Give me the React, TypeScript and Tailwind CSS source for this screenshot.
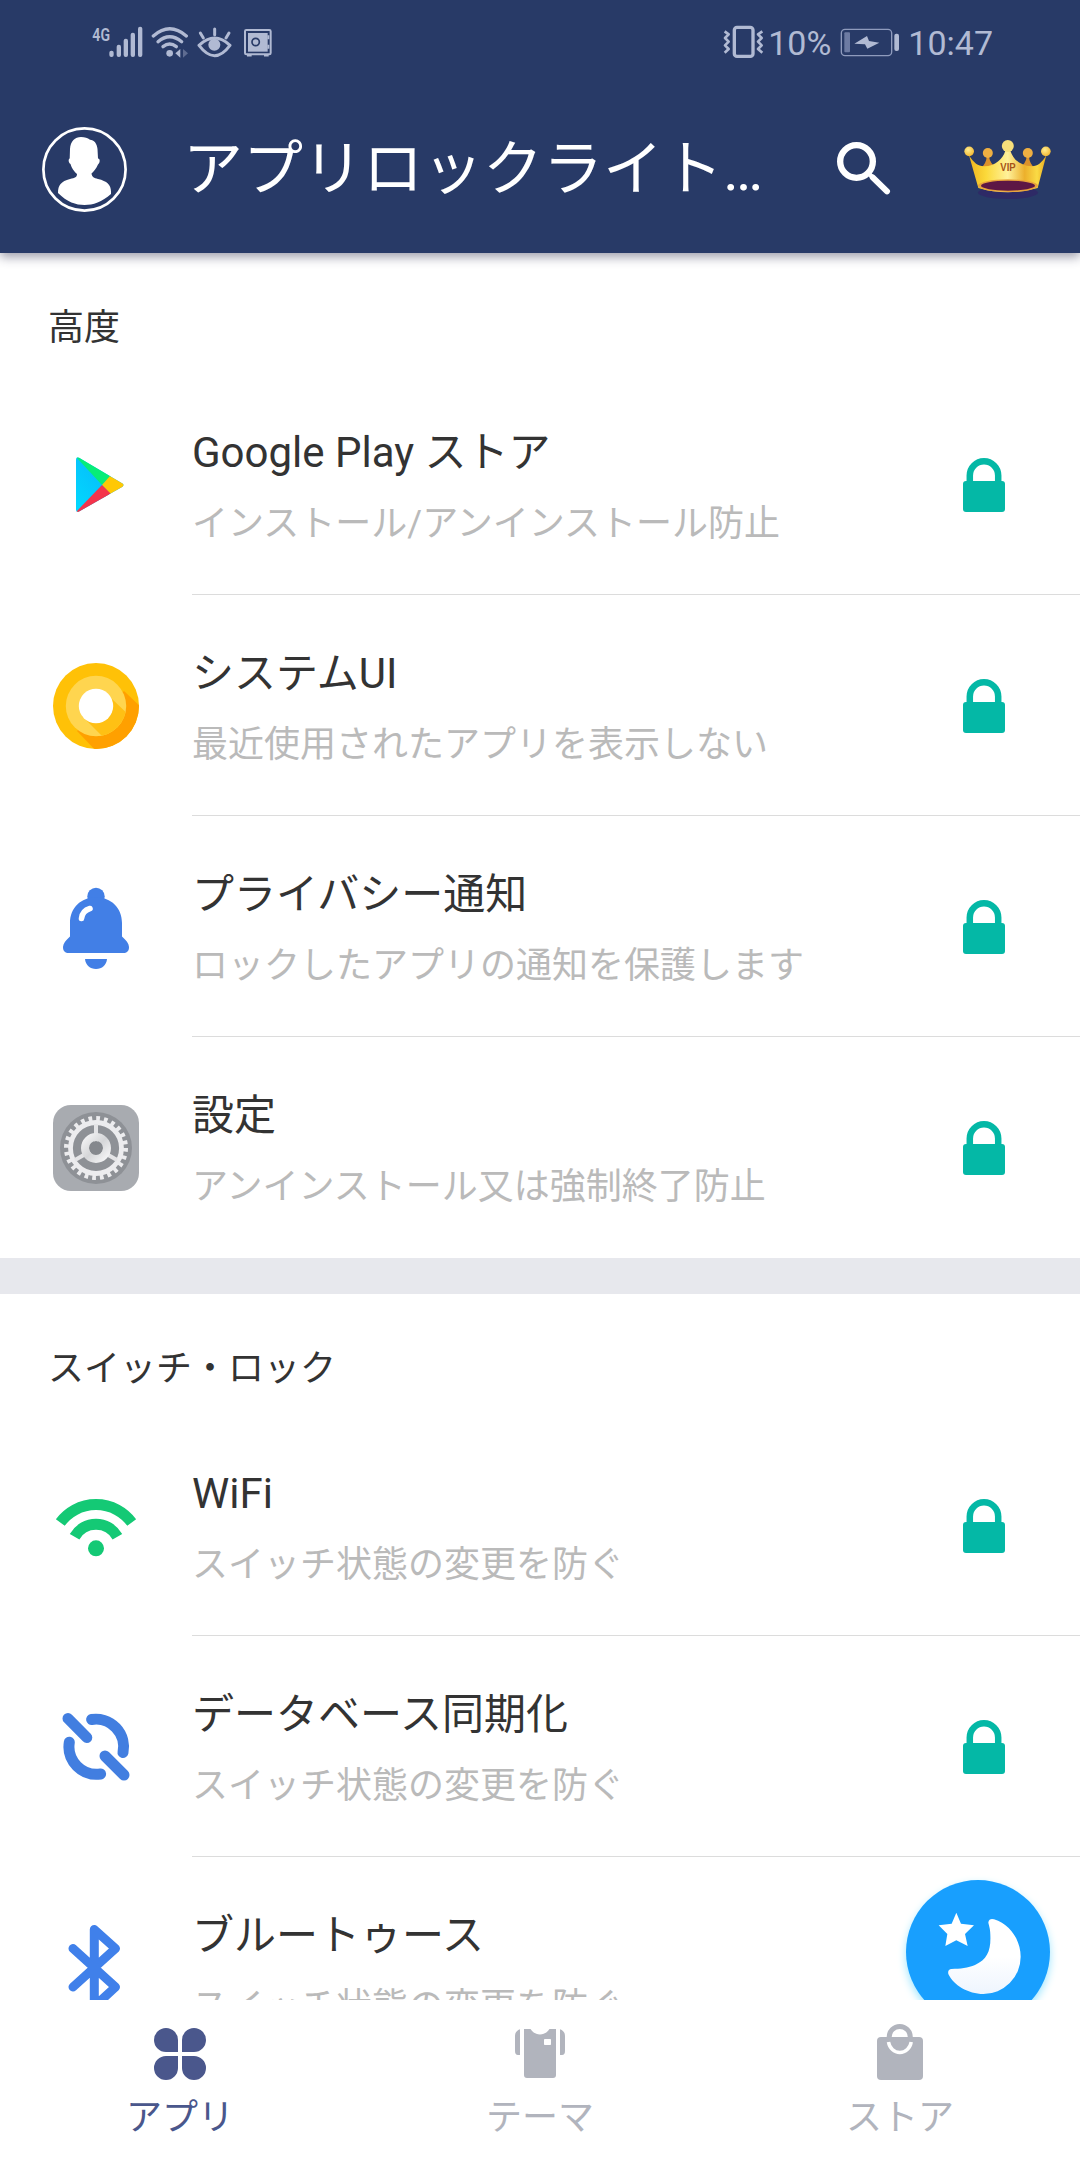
import React from "react";

type IconProps = { className?: string };

const STATUS = "#b1bad3";

function SignalIcon() {
  return (
    <svg viewBox="36 45 156 99" className="h-[33px] w-[52px]" fill={STATUS}>
      <text x="37" y="92" fontSize="56" fontWeight="600" textLength="53" lengthAdjust="spacingAndGlyphs" fontFamily="Roboto, sans-serif">4G</text>
      <rect x="88" y="122" width="13" height="19" rx="6" />
      <rect x="110" y="104" width="13" height="37" rx="6" />
      <rect x="131" y="86" width="13" height="55" rx="6" />
      <rect x="152" y="68" width="13" height="73" rx="6" />
      <rect x="174" y="50" width="13" height="91" rx="6" />
    </svg>
  );
}

function StatusWifiIcon() {
  return (
    <svg viewBox="213 45 114 99" className="ml-[7px] h-[33px] w-[38px]" fill="none" stroke={STATUS} strokeWidth="10" strokeLinecap="round">
      <path d="M220 78 Q269 35 319 78" />
      <path d="M234 95 Q269 65 305 95" />
      <path d="M249 110 Q269 94 289 110" />
      <circle cx="269" cy="130" r="10" fill={STATUS} stroke="none" />
      <path d="M286 130 L301 117 V143 Z" fill={STATUS} stroke="none" />
      <path d="M324 130 L309 117 V143 Z" fill={STATUS} stroke="none" opacity="0.4" />
    </svg>
  );
}

function EyeIcon() {
  return (
    <svg viewBox="351 45 105 99" className="ml-[8px] h-[33px] w-[35px]" fill="none" stroke={STATUS} strokeWidth="9" strokeLinecap="round">
      <path d="M357 106 Q404 62 450 106 Q404 168 357 106 Z" strokeLinejoin="round" />
      <circle cx="403" cy="104" r="18" fill={STATUS} stroke="none" />
      <path d="M404 57 V74 M361 69 L370 84 M447 69 L438 84" />
    </svg>
  );
}

function SafeIcon() {
  return (
    <svg viewBox="489 45 90 99" className="ml-[11px] h-[33px] w-[30px]" fill="none">
      <rect x="495" y="60" width="77" height="73" rx="4" stroke={STATUS} strokeWidth="6" />
      <rect x="504" y="69" width="59" height="56" fill={STATUS} />
      <circle cx="527" cy="96" r="11" stroke="#283a67" strokeWidth="5" />
      <path d="M565 76 V88 M565 104 V116" stroke={STATUS} strokeWidth="6" />
      <path d="M501 136 H515 M552 136 H566" stroke={STATUS} strokeWidth="7" />
    </svg>
  );
}

function VibrateIcon() {
  return (
    <svg viewBox="69 45 123 99" className="h-[33px] w-[41px]" fill="none" stroke={STATUS} strokeWidth="8" strokeLinejoin="round">
      <rect x="103" y="52" width="56" height="87" rx="8" strokeWidth="10" />
      <path d="M74 64 L86 73 L75 84 L86 95 L75 106 L86 117 L74 128" />
      <path d="M187 64 L174 73 L185 84 L174 95 L185 106 L174 117 L187 128" />
    </svg>
  );
}

function BatteryIcon() {
  return (
    <svg viewBox="420 45 180 99" className="ml-[9px] h-[33px] w-[60px]" fill="none">
      <rect x="424" y="58" width="151" height="79" rx="11" stroke="#8f9bbd" strokeWidth="4" />
      <rect x="433" y="67" width="17" height="60" rx="3" fill="#6d7ba3" />
      <path d="M463 101 L501 78 L507 93 L538 98 L502 116 L495 103 Z" fill={STATUS} />
      <rect x="583" y="71" width="14" height="52" rx="6" fill={STATUS} />
    </svg>
  );
}

function Avatar() {
  return (
    <svg viewBox="0 0 85 85" className="h-[85px] w-[85px] shrink-0">
      <circle cx="42.5" cy="42.5" r="41.1" fill="none" stroke="#fff" strokeWidth="2.7" />
      <path
        fill="#fff"
        d="M28 22 C28.500 14 33 10 39 10 C43 10 45.500 11 48 12.800 C52 13 55 16.500 55.500 22 L56 31.500 C58.500 31.500 58 36 56 37.500 C54 42 52 44 49.500 46.500 C50 50 52 51 56 52 C65 54 69 58 69 64.500 L69 67 C60 75 51 78 42.500 78 C34 78 25 75 16 66 C16 58 19 54.500 28 52 C33 51 35 50 35 47 C32 44 30 42 28.500 37 C26.500 36 26 32 27.700 31.500 Z"
      />
    </svg>
  );
}

function SearchIcon() {
  return (
    <svg viewBox="168 126 165 165" className="ml-[53px] h-[55px] w-[55px] shrink-0" fill="none" stroke="#fff">
      <circle cx="229.500" cy="184.500" r="49" strokeWidth="19" />
      <path d="M269 223 L279 233" strokeWidth="13" />
      <path d="M278 232 L321 274" strokeWidth="18" strokeLinecap="round" />
    </svg>
  );
}

function CrownIcon() {
  return (
    <svg viewBox="549 114 270 189" className="ml-[72px] h-[63px] w-[90px] shrink-0">
      <defs>
        <linearGradient id="gold" x1="0" x2="1" y1="0" y2="0">
          <stop offset="0" stopColor="#f0b51e" />
          <stop offset="0.22" stopColor="#fbd93a" />
          <stop offset="0.5" stopColor="#fff19a" />
          <stop offset="0.72" stopColor="#ecb02c" />
          <stop offset="0.88" stopColor="#fadb45" />
          <stop offset="1" stopColor="#e9a91d" />
        </linearGradient>
        <radialGradient id="ball" cx="0.4" cy="0.35" r="0.7">
          <stop offset="0" stopColor="#ffed91" />
          <stop offset="1" stopColor="#f1b52d" />
        </radialGradient>
      </defs>
      <ellipse cx="684" cy="278" rx="90" ry="19" fill="#2e2a66" />
      <path d="M602 205 Q619 190 620 170 H627 Q630 190 650 205 Z M718 205 Q738 190 740 170 H747 Q748 190 765 205 Z" fill="#dc922b" />
      <circle cx="623.500" cy="159" r="15" fill="#eeaf42" />
      <circle cx="743.500" cy="159" r="15" fill="#eeaf42" />
      <path d="M567 166 C582 190 596 200 613 199 C646 197 668 178 676 152 H691 C700 180 722 197 754 199 C772 200 786 188 799 166 L773 264 Q684 290 595 264 Z" fill="url(#gold)" />
      <ellipse cx="684" cy="257" rx="90" ry="19" fill="#e8a33b" />
      <ellipse cx="684" cy="257" rx="81" ry="15" fill="#5d1745" />
      <circle cx="567.500" cy="154" r="14.500" fill="url(#ball)" />
      <circle cx="797.500" cy="154" r="14.500" fill="url(#ball)" />
      <circle cx="683.500" cy="138" r="18" fill="#f7df7b" />
      <text x="661" y="213" fontSize="30" fontWeight="600" textLength="46" lengthAdjust="spacingAndGlyphs" fill="#a65218" fontFamily="Liberation Sans, sans-serif">VIP</text>
    </svg>
  );
}

const ICON = "h-[86px] w-[86px] shrink-0";

function PlayIcon() {
  return (
    <svg viewBox="0 0 86 86" className={ICON}>
      <defs>
        <linearGradient id="playBlue" x1="1" y1="0" x2="0" y2="1">
          <stop offset="0" stopColor="#0aaef8" />
          <stop offset="1" stopColor="#00dcff" />
        </linearGradient>
        <clipPath id="playShape">
          <path d="M23 17.500 Q23 14.500 26 15.800 L69.500 41.500 Q71.500 43 69.500 44.700 L26 69.500 Q23 70.500 23 68 Z" />
        </clipPath>
      </defs>
      <g clipPath="url(#playShape)">
        <rect x="20" y="12" width="52" height="60" fill="url(#playBlue)" />
        <path d="M23 15 L49 43 L58 34 L30 10 Z" fill="#07ed78" />
        <path d="M49 43 L57 34 L75 43 L57.500 52 Z" fill="#ffc804" />
        <path d="M49 43 L57.500 51.500 L30 76 L22 71 Z" fill="#f4344b" />
        <path d="M30 67 L58 51 L30 76 L22 71 Z" fill="#d82a52" opacity="0.6" />
      </g>
    </svg>
  );
}

function OreoIcon() {
  return (
    <svg viewBox="0 0 86 86" className={ICON}>
      <defs>
        <clipPath id="oreoOuter"><circle cx="43" cy="43" r="43" /></clipPath>
        <clipPath id="oreoMid"><circle cx="43" cy="43" r="30.200" /></clipPath>
      </defs>
      <g clipPath="url(#oreoOuter)">
        <rect width="86" height="86" fill="#ffc107" />
        <path d="M71 28 L90 46 V90 H45 L24 68 Z" fill="#ffa000" />
      </g>
      <g clipPath="url(#oreoMid)">
        <rect width="86" height="86" fill="#ffd54f" />
        <path d="M59 36 L80 56 V80 H56 L29 53 Z" fill="#ffc014" />
      </g>
      <circle cx="43" cy="43" r="17.200" fill="#fff" />
    </svg>
  );
}

function BellIcon() {
  return (
    <svg viewBox="0 0 86 86" className={ICON} fill="#427fe6">
      <circle cx="43" cy="12.500" r="8.700" />
      <path d="M17 39 C17 24 28 13.300 43 13.300 C58 13.300 69 24 69 39 V52.500 C73 56 76 59.500 76 63 C76 67 74 69 70 69 H16 C12 69 10 67 10 63 C10 59.500 13 56 17 52.500 Z" />
      <path d="M32 75 H54 C53.500 81 49 85 43 85 C37 85 32.500 81 32 75 Z" />
      <path d="M37 24.500 C32 26 29 29.500 28.500 34.500" fill="none" stroke="#fff" strokeWidth="5.600" strokeLinecap="round" />
    </svg>
  );
}

function SettingsIcon() {
  return (
    <svg viewBox="0 0 86 86" className={ICON} fill="none">
      <defs>
        <linearGradient id="steel" x1="0" y1="0" x2="1" y2="1">
          <stop offset="0" stopColor="#f2f2f3" />
          <stop offset="0.5" stopColor="#d5d6d8" />
          <stop offset="1" stopColor="#f4f4f5" />
        </linearGradient>
      </defs>
      <rect width="86" height="86" rx="18" fill="#a8abb0" />
      <circle cx="43" cy="43" r="36" fill="#8e9196" />
      <circle cx="43" cy="43" r="29.500" stroke="#ececee" strokeWidth="5" strokeDasharray="3.723 4" />
      <circle cx="43" cy="43" r="25.500" stroke="#ececee" strokeWidth="4.800" />
      <path d="M43 43 V19 M43 43 L22 55 M43 43 L64 55" stroke="#e4e4e6" strokeWidth="4" />
      <circle cx="43" cy="43" r="7" fill="#85888d" />
      <circle cx="43" cy="43" r="11" stroke="url(#steel)" strokeWidth="8" />
    </svg>
  );
}

function WifiIcon() {
  return (
    <svg viewBox="0 0 86 86" className={ICON} fill="none" stroke="#14c975" strokeWidth="11">
      <path d="M7.300 39.500 A44.400 44.400 0 0 1 78.700 39.500" />
      <path d="M21.600 53.700 A24.600 24.600 0 0 1 64.400 53.700" />
      <circle cx="43" cy="65.300" r="8" fill="#14c975" stroke="none" />
    </svg>
  );
}

function SyncIcon() {
  return (
    <svg viewBox="0 0 86 86" className={ICON} fill="none" stroke="#427ee0" strokeWidth="11" strokeLinecap="round">
      <path d="M15 14.500 L33.800 33.500 M52 52 L71 71" />
      <path d="M38.600 15.500 A27.700 27.700 0 0 1 70 48.500" />
      <path d="M16.300 38.300 A27.700 27.700 0 0 0 47.600 70" />
    </svg>
  );
}

function BluetoothIcon() {
  return (
    <svg viewBox="0 0 86 86" className={ICON} fill="none" stroke="#4080ea" strokeWidth="9" strokeLinecap="round" strokeLinejoin="round">
      <path d="M20 23.500 L62.500 62 L41.300 81.500 V4.500 L62.500 23.500 L20 62" />
    </svg>
  );
}

function LockIcon() {
  return (
    <svg viewBox="0 0 42 54" className="mr-[75px] h-[54px] w-[42px] shrink-0">
      <path d="M6.800 27 V17.500 A14.200 14.200 0 0 1 35.200 17.500 V27" fill="none" stroke="#04b8a6" strokeWidth="6.500" />
      <rect y="23" width="42" height="31" rx="3" fill="#04b8a6" />
    </svg>
  );
}

function AppsIcon({ className }: IconProps) {
  return (
    <svg viewBox="0 0 52 52" className={className} fill="currentColor">
      <path d="M24 24 H12 A12 12 0 1 1 24 12 Z M28 24 V12 A12 12 0 1 1 40 24 Z M24 28 V40 A12 12 0 1 1 12 28 Z M28 28 H40 A12 12 0 1 1 28 40 Z" />
    </svg>
  );
}

function ShirtIcon({ className }: IconProps) {
  return (
    <svg viewBox="0 0 52 52" className={className} fill="currentColor">
      <path d="M10 1 H16.500 C19 4.500 22 6.500 26 6.500 C30 6.500 33 4.500 35.500 1 H42 V47 Q42 50 39 50 H13 Q10 50 10 47 Z" />
      <path d="M6 1.200 V27 H4 Q1 27 1 23 V8 Q1 3 6 1.200 Z M46 1.200 V27 H48 Q51 27 51 23 V8 Q51 3 46 1.200 Z" />
      <rect x="30" y="11" width="7" height="6" rx="0.800" fill="#fff" />
    </svg>
  );
}

function BagIcon({ className }: IconProps) {
  return (
    <svg viewBox="0 0 52 52" className={className} overflow="visible" fill="none">
      <rect x="3" y="9" width="46" height="43" rx="4" fill="currentColor" />
      <path d="M15.200 9.500 V9 A10.500 10.500 0 0 1 36.300 9 V9.500" stroke="currentColor" strokeWidth="5" />
      <path d="M14.500 14 A11.500 12.500 0 0 0 37.200 14" stroke="#fff" strokeWidth="3.500" />
    </svg>
  );
}

function NightButton() {
  return (
    <button aria-label="Night mode" className="absolute top-[1627px] right-[30px] h-[144px] w-[144px] rounded-full bg-[#189ffe] shadow-[0_4px_8px_#9ee6ff]">
      <svg viewBox="138 120 432 432" className="h-full w-full">
        <defs>
          <linearGradient id="moon" x1="0" y1="0" x2="0" y2="1">
            <stop offset="0.5" stopColor="#fff" />
            <stop offset="1" stopColor="#eef5fe" />
          </linearGradient>
        </defs>
        <path d="M289 218 L303 251 L342 256 L315 282 L323 318 L289 301 L256 318 L262 282 L236 256 L275 251 Z" fill="#fff" />
        <path d="M385 247 Q388 234 402 238 C450 253 482 300 482 350 A112 112 0 0 1 370 462 C325 462 280 435 265 402 Q262 388 275 387 C300 386 325 384 345 375 C383 357 393 330 391 285 C391 265 386 256 385 247 Z" fill="url(#moon)" />
      </svg>
    </button>
  );
}

type Item = { title: string; note: string; icon: React.ReactNode };

const advanced: Item[] = [
  { title: "Google Play ストア", note: "インストール/アンインストール防止", icon: <PlayIcon /> },
  { title: "システムUI", note: "最近使用されたアプリを表示しない", icon: <OreoIcon /> },
  { title: "プライバシー通知", note: "ロックしたアプリの通知を保護します", icon: <BellIcon /> },
  { title: "設定", note: "アンインストール又は強制終了防止", icon: <SettingsIcon /> },
];

const switches: Item[] = [
  { title: "WiFi", note: "スイッチ状態の変更を防ぐ", icon: <WifiIcon /> },
  { title: "データベース同期化", note: "スイッチ状態の変更を防ぐ", icon: <SyncIcon /> },
  { title: "ブルートゥース", note: "スイッチ状態の変更を防ぐ", icon: <BluetoothIcon /> },
];

function Row({ item, last }: { item: Item; last: boolean }) {
  return (
    <li className="flex h-[221px] pl-[53px]">
      <div className="flex h-full items-center pt-px">{item.icon}</div>
      <div className={`ml-[53px] flex flex-1 justify-between border-b ${last ? "border-transparent" : "border-[#dcdcdc]"}`}>
        <div className="pt-[54px] whitespace-nowrap">
          <h3 className="text-[42px] leading-[50px] text-[#333]">{item.title}</h3>
          <p className="mt-6 text-[36px] leading-[44px] text-[#bababa]">{item.note}</p>
        </div>
        <div className="flex items-center pt-[2px]">{item.title !== "ブルートゥース" && <LockIcon />}</div>
      </div>
    </li>
  );
}

function Section({ title, items }: { title: string; items: Item[] }) {
  return (
    <section>
      <h2 className="h-[121px] pt-[53px] pl-[48px] text-[36px] leading-[44px] text-[#333]">{title}</h2>
      <ul>
        {items.map((item, i) => (
          <Row key={item.title} item={item} last={i === items.length - 1} />
        ))}
      </ul>
    </section>
  );
}

export default function App() {
  return (
    <div className="flex h-[2160px] w-[1080px] flex-col overflow-hidden bg-white font-[Roboto,'Noto_Sans_CJK_JP',sans-serif]">
      <header className="relative z-10 h-[253px] shrink-0 bg-[#283a67] shadow-[0_4px_10px_rgba(40,40,70,0.45)]">
        <div className="flex h-[86px] justify-between pt-[25px] pr-[87px] pl-[92px] text-[34px] leading-[36px] text-[#b1bad3]">
          <div className="flex">
            <SignalIcon />
            <StatusWifiIcon />
            <EyeIcon />
            <SafeIcon />
          </div>
          <div className="flex">
            <VibrateIcon />
            <span className="ml-1">10%</span>
            <BatteryIcon />
            <span className="ml-2">10:47</span>
          </div>
        </div>
        <div className="flex h-[167px] items-center pl-[42px]">
          <Avatar />
          <h1 className="ml-[56px] w-[600px] shrink-0 text-[60px] leading-[72px] whitespace-nowrap text-white">アプリロックライト…</h1>
          <SearchIcon />
          <CrownIcon />
        </div>
      </header>

      <main className="relative min-h-0 flex-1 overflow-hidden">
        <Section title="高度" items={advanced} />
        <div className="h-9 bg-[#e7e8ed]" />
        <Section title="スイッチ・ロック" items={switches} />
        <NightButton />
      </main>

      <nav className="grid h-[160px] shrink-0 grid-cols-3 bg-white text-[36px] leading-[44px] text-[#b1b4bd]">
        <a className="flex flex-col items-center pt-7 text-[#4a578c]">
          <AppsIcon className="h-[52px] w-[52px]" />
          <span className="mt-4">アプリ</span>
        </a>
        <a className="flex flex-col items-center pt-7">
          <ShirtIcon className="h-[52px] w-[52px]" />
          <span className="mt-4">テーマ</span>
        </a>
        <a className="flex flex-col items-center pt-7">
          <BagIcon className="h-[52px] w-[52px]" />
          <span className="mt-4">ストア</span>
        </a>
      </nav>
    </div>
  );
}
